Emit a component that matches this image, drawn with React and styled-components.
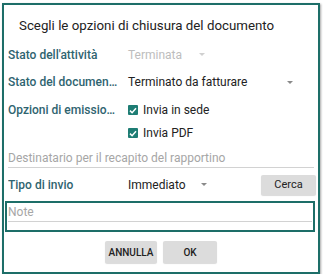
import React from "react";
import styled, { createGlobalStyle } from "styled-components";

const Global = createGlobalStyle`
  html, body { margin: 0; padding: 0; background: #ffffff; }
  body { font-family: Roboto, "Liberation Sans", Arial, sans-serif; }
`;

const Dialog = styled.div`
  box-sizing: border-box;
  margin: 3px 0 0 2px;
  width: 318px;
  height: 271px;
  border: 2px solid #1d6e68;
  background: #fff;
  box-shadow: 1px 1px 2px rgba(0,0,0,0.35);
  display: flex;
  flex-direction: column;
`;

const Title = styled.div`
  font-size: 13.3px;
  color: #222;
  padding: 11px 0 0 15px;
  height: 20px;
  line-height: 20px;
`;

const Row = styled.div`
  display: grid;
  grid-template-columns: 120px 1fr auto;
  align-items: center;
  height: ${p => p.$h}px;
  margin-top: ${p => p.$mt || 0}px;
  padding: 0 2px 0 4px;
`;

const Label = styled.div`
  font-size: 12px;
  font-weight: 500;
  color: #2f6470;
  white-space: nowrap;
  overflow: hidden;
  text-overflow: ellipsis;
  max-width: 111px;
`;

const Select = styled.div`
  display: flex;
  align-items: center;
  font-size: 12px;
  color: ${p => (p.$disabled ? "#bdbdbd" : "#222")};
`;

const Arrow = styled.span`
  display: inline-block;
  width: 0;
  height: 0;
  margin-left: ${p => p.$gap}px;
  border-left: 3px solid transparent;
  border-right: 3px solid transparent;
  border-top: 3px solid ${p => (p.$disabled ? "#d0d0d0" : "#8a8a8a")};
`;

const Check = styled.div`
  display: flex;
  align-items: center;
  font-size: 12px;
  color: #222;
  gap: 5px;
`;

const Box = styled.span`
  width: 10px;
  height: 10px;
  border-radius: 1px;
  background: #1e7d74;
  display: inline-flex;
  align-items: center;
  justify-content: center;
`;

const Field = styled.div`
  margin: ${p => p.$m};
  padding: 0;
  border-bottom: 1.5px solid #d2d2d2;
  font-size: 12px;
  color: #a6a6a6;
  height: ${p => p.$h}px;
  line-height: ${p => p.$h}px;
`;

const Button = styled.button`
  font-family: Roboto, "Liberation Sans", Arial, sans-serif;
  background: #dcdcdc;
  border: none;
  border-radius: 2px;
  color: #222;
  font-size: ${p => p.$fs || 10}px;
  font-weight: ${p => p.$w || 500};
  height: ${p => p.$h}px;
  width: ${p => p.$wd}px;
  padding: 0;
  box-shadow: 0 1px 1px rgba(0,0,0,0.15);
`;

const NoteBox = styled.div`
  box-sizing: border-box;
  margin: 1px 3px 0 1px;
  height: 31px;
  border: 2px solid #1d6e68;
  padding: 0 1px 0 1px;
`;

const Actions = styled.div`
  display: flex;
  justify-content: center;
  gap: 6px;
  margin-top: 9px;
`;

const Tick = () => (
  <svg width="8" height="7" viewBox="0 0 8 7">
    <path d="M1 3.6 L3.1 5.7 L7 1.3" stroke="#fff" strokeWidth="1.5" fill="none" />
  </svg>
);

export default function App() {
  return (
    <>
      <Global />
      <Dialog>
        <Title>Scegli le opzioni di chiusura del documento</Title>
        <Row $h={27} $mt={5}>
          <Label>Stato dell'attività</Label>
          <Select $disabled>
            Terminata
            <Arrow $gap={17} $disabled />
          </Select>
        </Row>
        <Row $h={28}>
          <Label>Stato del documento</Label>
          <Select>
            Terminato da fatturare
            <Arrow $gap={40} />
          </Select>
        </Row>
        <Row $h={28}>
          <Label>Opzioni di emissione</Label>
          <Check>
            <Box><Tick /></Box>
            Invia in sede
          </Check>
        </Row>
        <Row $h={18}>
          <span />
          <Check>
            <Box><Tick /></Box>
            Invia PDF
          </Check>
        </Row>
        <Field $h={18} $m="7px 4px 0 4px">Destinatario per il recapito del rapportino</Field>
        <Row $h={31} $mt={1}>
          <Label>Tipo di invio</Label>
          <Select>
            Immediato
            <Arrow $gap={15} />
          </Select>
          <Button $h={20} $wd={55} $fs={11} $w={400}>Cerca</Button>
        </Row>
        <NoteBox>
          <Field $h={18} $m="0">Note</Field>
        </NoteBox>
        <Actions>
          <Button $h={22} $wd={52}>ANNULLA</Button>
          <Button $h={22} $wd={54}>OK</Button>
        </Actions>
      </Dialog>
    </>
  );
}
